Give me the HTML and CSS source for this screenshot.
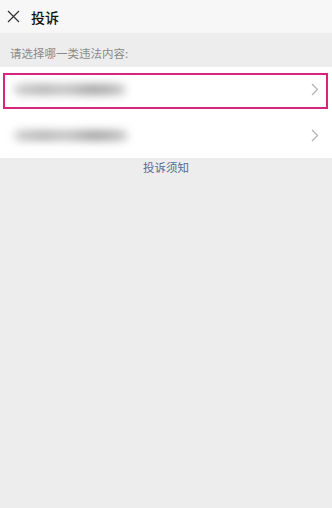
FILE: index.html
```html
<!DOCTYPE html>
<html lang="zh-CN">
<head>
    <meta charset="UTF-8">
    <title>投诉</title>
    <link rel="stylesheet" href="styles.css">
</head>
<body>

    <div class="topbar">
        <span class="close">
            <svg width="13" height="13" viewBox="0 0 13 13">
                <path d="M1 1 L12 12 M12 1 L1 12" stroke="#333" stroke-width="1.2" fill="none"/>
            </svg>
        </span>
        <span class="title">投诉</span>
    </div>

    <div class="hint">请选择哪一类违法内容:</div>

    <div class="list">
        <div class="row">
            <span class="blur b1"></span>
            <span class="arrow">
                <svg width="8" height="13" viewBox="0 0 8 13"><path d="M1 1 L6.5 6.5 L1 12" stroke="#b2b2b2" stroke-width="1.2" fill="none"/></svg>
            </span>
            <div class="mark"></div>
        </div>
        <div class="row">
            <span class="blur b2"></span>
            <span class="arrow">
                <svg width="8" height="13" viewBox="0 0 8 13"><path d="M1 1 L6.5 6.5 L1 12" stroke="#b2b2b2" stroke-width="1.2" fill="none"/></svg>
            </span>
        </div>
    </div>

    <div class="notice">投诉须知</div>

</body>
</html>
```

FILE: styles.css
```css
body {
    margin: 0;
    background-color: #ededed;
    font-family: "Noto Sans CJK SC", "Noto Sans", sans-serif;
    height: 508px;
}

.topbar {
    display: flex;
    align-items: center;
    gap: 11px;
    height: 33px;
    padding-left: 7px;
    background-color: #f7f7f7;
}

.close {
    display: flex;
}

.title {
    font-size: 14px;
    font-weight: 500;
    color: #111;
}

.hint {
    font-size: 11.5px;
    color: #8a8a8a;
    padding: 12px 0 0 10px;
    height: 22px;
}

.list {
    background-color: #fff;
}

.row {
    position: relative;
    display: flex;
    align-items: center;
    justify-content: space-between;
    height: 45.5px;
    padding: 0 13px 0 14px;
}

.blur {
    display: block;
    height: 11px;
    border-radius: 6px;
    background: linear-gradient(90deg, #cfcfcf, #b4b4b4 25%, #c4c4c4 45%, #a4a4a4 70%, #b0b0b0 85%, #d2d2d2);
    filter: blur(4px);
}

.b1 {
    width: 112px;
}

.b2 {
    width: 114px;
}

.arrow {
    display: flex;
}

/* highlight frame */
.mark {
    position: absolute;
    left: 3px;
    right: 4px;
    top: 6px;
    bottom: 4px;
    border: 2px solid #d6257a;
}

.notice {
    text-align: center;
    font-size: 11.5px;
    color: #576b95;
    padding-top: 1px;
}
```
